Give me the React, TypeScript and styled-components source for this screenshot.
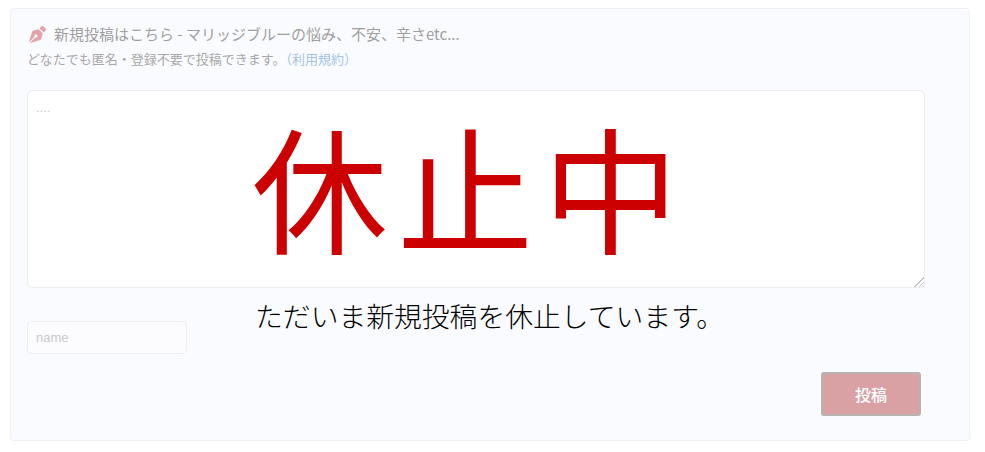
import * as React from "react";
import styled, { createGlobalStyle } from "styled-components";
import { FaPenNib } from "react-icons/fa";

const JP = `"Noto Sans CJK JP", "Liberation Sans", sans-serif`;

const GlobalStyle = createGlobalStyle`
  html, body {
    margin: 0;
    background: #fff;
    font-family: "Liberation Sans", "Noto Sans CJK JP", sans-serif;
  }
`;

const Page = styled.div`
  position: relative;
  width: 985px;
  height: 452px;
  padding: 8px 15px 0 10px;
  box-sizing: border-box;
  overflow: hidden;
`;

const Panel = styled.section`
  height: 433px;
  box-sizing: border-box;
  padding: 15px 44px 0 16px;
  background: #fafbff;
  border: 1px solid #f0f0f2;
  border-radius: 4px;
  display: flex;
  flex-direction: column;
`;

const Heading = styled.h2`
  margin: 0 0 0 2px;
  display: flex;
  align-items: center;
  gap: 8px;
  height: 20px;
  font-size: 15px;
  font-weight: 400;
  line-height: 20px;
  color: #a0a0a0;
  font-family: ${JP};
  white-space: nowrap;
`;

const PenIcon = styled(FaPenNib)`
  width: 17px;
  height: 17px;
  flex: none;
  color: #e2a4a8;
`;

const Note = styled.p`
  margin: 6px 0 0;
  font-size: 13px;
  line-height: 18px;
  color: #a8a8a8;
  font-family: ${JP};
`;

const TermsLink = styled.a`
  color: #a3c4e8;
  text-decoration: none;
`;

const Message = styled.textarea`
  display: block;
  margin-top: 22px;
  width: 898px;
  height: 198px;
  box-sizing: border-box;
  padding: 9px 8px;
  background: #fff;
  border: 1px solid #ececee;
  border-radius: 6px;
  font-size: 13px;
  font-family: "Liberation Sans", sans-serif;
  outline: none;
  &::placeholder {
    color: #c8c8c8;
  }
  &::-webkit-resizer {
    background:
      linear-gradient(135deg, #fff 58%, transparent 58%),
      repeating-linear-gradient(135deg, transparent 0 2px, #c4c4c4 2px 3px);
  }
`;

const NameInput = styled.input`
  display: block;
  margin-top: 33px;
  width: 160px;
  height: 33px;
  box-sizing: border-box;
  padding: 0 8px;
  background: #fcfcfe;
  border: 1px solid #eeeef0;
  border-radius: 5px;
  font-size: 13px;
  font-family: "Liberation Sans", sans-serif;
  outline: none;
  &::placeholder {
    color: #c9c9c9;
  }
`;

const Actions = styled.div`
  margin-top: 18px;
  width: 894px;
  display: flex;
  justify-content: flex-end;
`;

const SubmitButton = styled.button`
  width: 100px;
  height: 44px;
  background: #d9a1a4;
  border: 2px solid #b8b3b3;
  border-radius: 3px;
  color: #fff;
  font-size: 16px;
  font-weight: 500;
  font-family: ${JP};
`;

const Overlay = styled.div`
  position: absolute;
  left: 0;
  top: 99px;
  width: 920px;
  display: flex;
  flex-direction: column;
  align-items: center;
  pointer-events: none;
  font-family: ${JP};
`;

const BigNotice = styled.div`
  margin-left: 20px;
  font-size: 136px;
  letter-spacing: 9.5px;
  line-height: 172px;
  height: 172px;
  color: #cc0000;
  font-weight: 400;
  white-space: nowrap;
`;

const SmallNotice = styled.div`
  margin-top: 24px;
  margin-left: 59px;
  font-size: 27.8px;
  font-weight: 300;
  line-height: 40px;
  color: #000;
  white-space: nowrap;
`;

export default function App() {
  return (
    <Page>
      <GlobalStyle />
      <Panel>
        <Heading>
          <PenIcon />
          <span>新規投稿はこちら - マリッジブルーの悩み、不安、辛さetc...</span>
        </Heading>
        <Note>
          どなたでも匿名・登録不要で投稿できます。<TermsLink href="#">（利用規約）</TermsLink>
        </Note>
        <Message placeholder="...." />
        <NameInput placeholder="name" />
        <Actions>
          <SubmitButton type="button">投稿</SubmitButton>
        </Actions>
      </Panel>
      <Overlay>
        <BigNotice>休止中</BigNotice>
        <SmallNotice>ただいま新規投稿を休止しています。</SmallNotice>
      </Overlay>
    </Page>
  );
}
